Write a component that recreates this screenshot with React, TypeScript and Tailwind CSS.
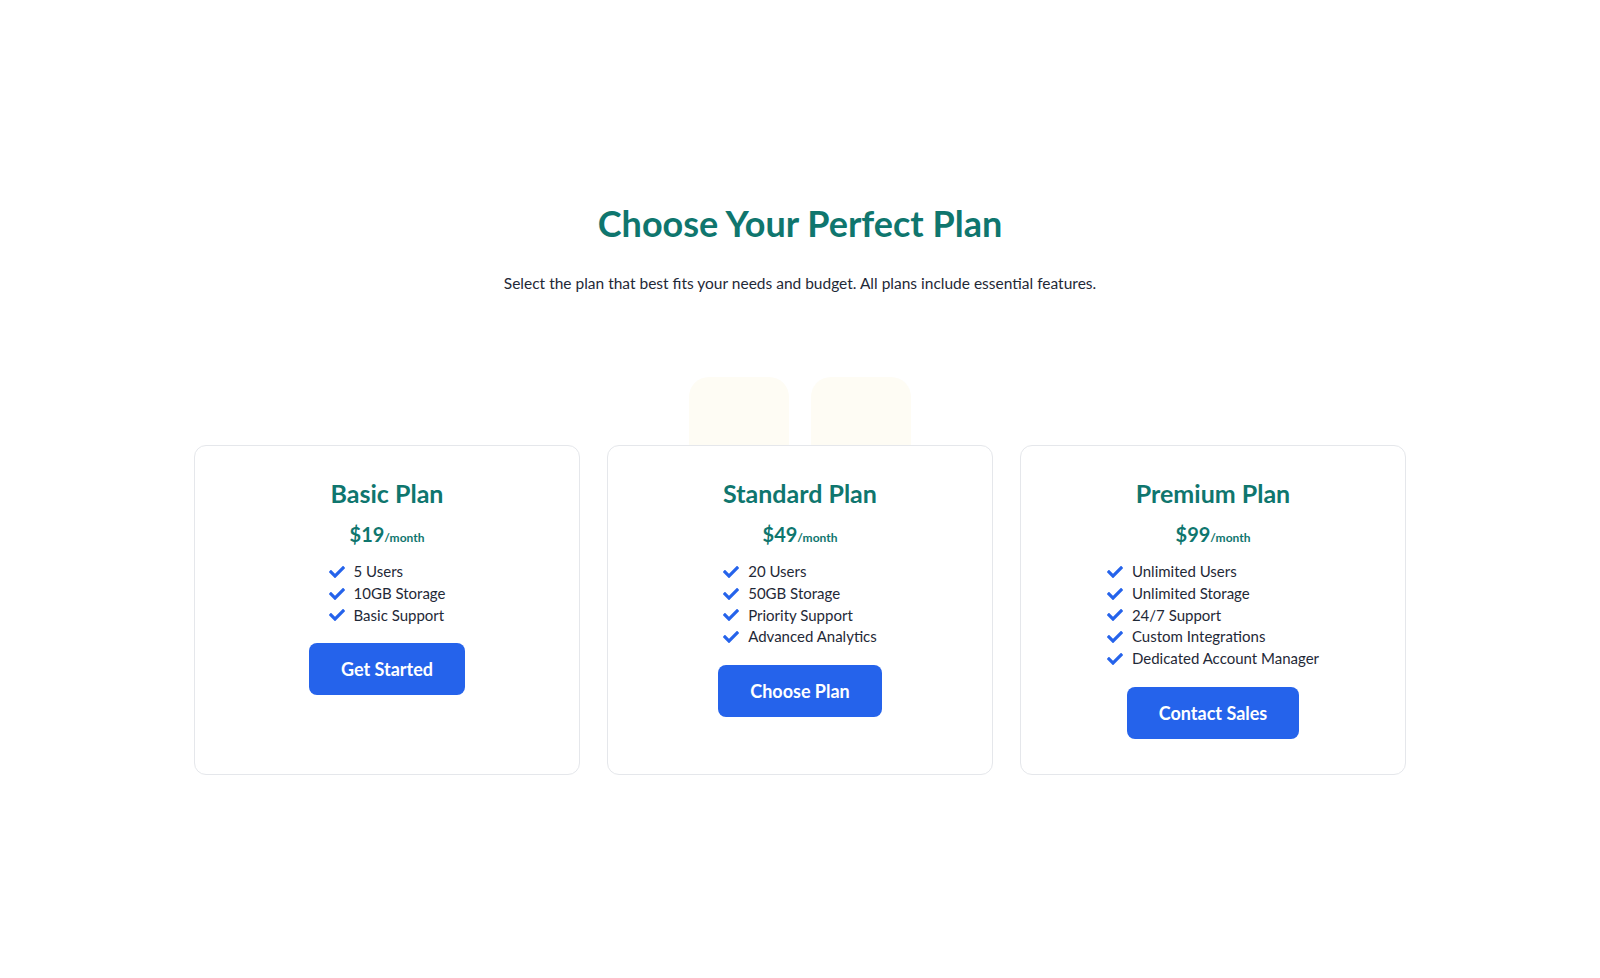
import React from 'react'
import { FaCheck } from 'react-icons/fa'

type Plan = {
    name: string
    price: string
    features: string[]
    cta: string
}

const plans: Plan[] = [
    { name: 'Basic Plan', price: '$19', features: ['5 Users', '10GB Storage', 'Basic Support'], cta: 'Get Started' },
    {
        name: 'Standard Plan',
        price: '$49',
        features: ['20 Users', '50GB Storage', 'Priority Support', 'Advanced Analytics'],
        cta: 'Choose Plan',
    },
    {
        name: 'Premium Plan',
        price: '$99',
        features: ['Unlimited Users', 'Unlimited Storage', '24/7 Support', 'Custom Integrations', 'Dedicated Account Manager'],
        cta: 'Contact Sales',
    },
]

function PlanCard({ plan }: { plan: Plan }) {
    return (
        <div className="bg-white border border-[#e5e7eb] rounded-xl pt-[31px] pb-[35px] px-6 flex flex-col items-center text-center">
            <h3 className="text-[25px] leading-8 font-bold text-[#0f766e] mb-[11px]">{plan.name}</h3>
            <div className="text-xl leading-7 font-bold text-[#0f766e] mb-[13px]">
                {plan.price}
                <span className="text-xs font-bold">/month</span>
            </div>
            <ul className="text-left mb-[17px]">
                {plan.features.map((f) => (
                    <li key={f} className="flex items-center gap-[9px] text-[15px] leading-[21.75px] text-[#1f2937]">
                        <FaCheck className="text-[#2563eb] w-4 h-4 shrink-0" />
                        {f}
                    </li>
                ))}
            </ul>
            <button className="bg-[#2563eb] text-white text-lg leading-7 font-bold px-8 py-3 rounded-lg">
                {plan.cta}
            </button>
        </div>
    )
}

export default function App() {
    return (
        <div className="min-h-screen bg-white pt-[203px] font-['Lato',sans-serif]">
            <h1 className="text-center text-4xl leading-10 font-bold text-[#0f766e]">Choose Your Perfect Plan</h1>
            <p className="text-center text-[15.5px] leading-6 text-[#1f2937] mt-[28px]">
                Select the plan that best fits your needs and budget. All plans include essential features.
            </p>
            <div className="flex justify-center gap-[22px] mt-[82px]">
                <div className="w-[100px] h-[68px] rounded-t-[20px] bg-[#fefcf4]"></div>
                <div className="w-[100px] h-[68px] rounded-t-[20px] bg-[#fefcf4]"></div>
            </div>
            <div className="w-[1212px] mx-auto grid grid-cols-3 gap-[27px]">
                {plans.map((p) => (
                    <PlanCard key={p.name} plan={p} />
                ))}
            </div>
        </div>
    )
}
